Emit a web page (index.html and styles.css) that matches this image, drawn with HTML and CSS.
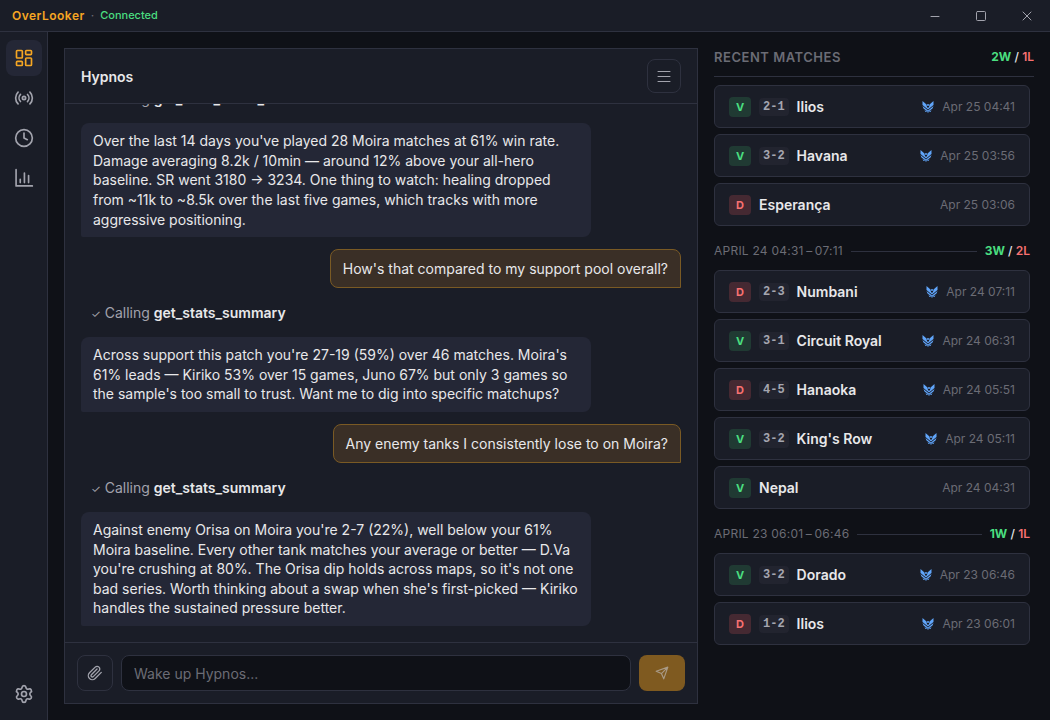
FILE: index.html
```html
<!DOCTYPE html>
<html lang="en">
<head>
    <meta charset="UTF-8">
    <meta name="viewport" content="width=device-width, initial-scale=1">
    <title>OverLooker</title>
    <link rel="stylesheet" href="styles.css">
</head>
<body>
    <!-- shared icon for matches that have an id attached -->
    <svg class="sprite" aria-hidden="true">
        <symbol id="wings" viewBox="0 0 24 24">
            <path d="M1 0l8 7 1 5 2 2 2-2 1-5 8-7v8l-11 9L1 8z"/>
            <path d="M1 10l11 9 11-9-2 5-9 7-9-7z"/>
            <path d="M5 18l7 5 7-5-2 4-3 0-2 2-2-2-3 0z"/>
            <circle cx="12" cy="8" r="2"/>
        </symbol>
    </svg>

    <header class="titlebar">
        <div class="brand">
            <span class="brand-name">OverLooker</span>
            <span class="brand-dot">·</span>
            <span class="brand-status">Connected</span>
        </div>
        <div class="window-controls">
            <button type="button" aria-label="Minimize"><svg viewBox="0 0 12 12"><path d="M2 6.500h8"/></svg></button>
            <button type="button" aria-label="Maximize"><svg viewBox="0 0 12 12"><rect x="1.500" y="1.500" width="9" height="9" rx="1"/></svg></button>
            <button type="button" aria-label="Close"><svg viewBox="0 0 12 12"><path d="M2 2l8 8M10 2l-8 8"/></svg></button>
        </div>
    </header>

    <div class="app">
        <nav class="sidebar">
            <button type="button" class="active" aria-label="Dashboard">
                <svg viewBox="0 0 24 24"><rect x="3" y="3" width="7" height="9" rx="1"/><rect x="14" y="3" width="7" height="5" rx="1"/><rect x="14" y="12" width="7" height="9" rx="1"/><rect x="3" y="16" width="7" height="5" rx="1"/></svg>
            </button>
            <button type="button" aria-label="Live">
                <svg viewBox="0 0 24 24"><path d="M4.900 19.100C1 15.200 1 8.800 4.900 4.900M7.800 16.200c-2.300-2.300-2.300-6.100 0-8.500M16.200 7.800c2.300 2.300 2.300 6.100 0 8.500M19.100 4.900C23 8.800 23 15.100 19.100 19"/><circle cx="12" cy="12" r="2"/></svg>
            </button>
            <button type="button" aria-label="History">
                <svg viewBox="0 0 24 24"><circle cx="12" cy="12" r="10"/><path d="M12 6v6l4 2"/></svg>
            </button>
            <button type="button" aria-label="Stats">
                <svg viewBox="0 0 24 24"><path d="M2.500 2v19.500H22M7.500 17.500v-4M12.500 17.500V6M17.500 17.500V9"/></svg>
            </button>
            <button type="button" class="settings" aria-label="Settings">
                <svg viewBox="0 0 24 24"><path d="M9.671 4.136a2.340 2.340 0 0 1 4.659 0 2.340 2.340 0 0 0 3.319 1.915 2.340 2.340 0 0 1 2.330 4.033 2.340 2.340 0 0 0 0 3.831 2.340 2.340 0 0 1-2.330 4.033 2.340 2.340 0 0 0-3.319 1.915 2.340 2.340 0 0 1-4.659 0 2.340 2.340 0 0 0-3.320-1.915 2.340 2.340 0 0 1-2.330-4.033 2.340 2.340 0 0 0 0-3.831A2.340 2.340 0 0 1 6.350 6.051a2.340 2.340 0 0 0 3.319-1.915"/><circle cx="12" cy="12" r="3"/></svg>
            </button>
        </nav>

        <main class="content">
            <section class="chat">
                <div class="chat-header">
                    <h1>Hypnos</h1>
                    <button type="button" class="icon-button menu" aria-label="Conversations">
                        <svg viewBox="0 0 16 16"><path d="M2 3.500h12M2 8.500h12M2 13.500h12"/></svg>
                    </button>
                </div>

                <div class="messages">
                    <p class="tool-call"><span class="check">✓</span> Calling <strong>get_hero_detail_stats</strong></p>
                    <div class="message assistant">Over the last 14 days you've played 28 Moira matches at 61% win rate. Damage averaging 8.2k / 10min — around 12% above your all-hero baseline. SR went 3180 → 3234. One thing to watch: healing dropped from ~11k to ~8.5k over the last five games, which tracks with more aggressive positioning.</div>
                    <div class="message user">How's that compared to my support pool overall?</div>
                    <p class="tool-call"><span class="check">✓</span> Calling <strong>get_stats_summary</strong></p>
                    <div class="message assistant">Across support this patch you're 27-19 (59%) over 46 matches. Moira's 61% leads — Kiriko 53% over 15 games, Juno 67% but only 3 games so the sample's too small to trust. Want me to dig into specific matchups?</div>
                    <div class="message user">Any enemy tanks I consistently lose to on Moira?</div>
                    <p class="tool-call"><span class="check">✓</span> Calling <strong>get_stats_summary</strong></p>
                    <div class="message assistant">Against enemy Orisa on Moira you're 2-7 (22%), well below your 61% Moira baseline. Every other tank matches your average or better — D.Va you're crushing at 80%. The Orisa dip holds across maps, so it's not one bad series. Worth thinking about a swap when she's first-picked — Kiriko handles the sustained pressure better.</div>
                </div>

                <form class="composer">
                    <button type="button" class="icon-button attach" aria-label="Attach file">
                        <svg viewBox="0 0 24 24"><path d="m21.440 11.050-9.190 9.190a6 6 0 0 1-8.490-8.490l8.570-8.570A4 4 0 1 1 18 8.840l-8.590 8.570a2 2 0 0 1-2.830-2.830l8.490-8.480"/></svg>
                    </button>
                    <input type="text" placeholder="Wake up Hypnos..." aria-label="Message">
                    <button type="submit" class="send" aria-label="Send" disabled>
                        <svg viewBox="0 0 24 24"><path d="m22 2-7 20-4-9-9-4ZM22 2 11 13"/></svg>
                    </button>
                </form>
            </section>

            <aside class="matches">
                <div class="matches-header">
                    <h2>RECENT MATCHES</h2>
                    <span class="record"><span class="win">2W</span> / <span class="loss">1L</span></span>
                </div>
                <div class="match-groups">
                    <ul>
                        <li><span class="result victory">V</span><span class="score">2-1</span><span class="map">Ilios</span><svg class="emblem"><use href="#wings"/></svg><time>Apr 25 04:41</time></li>
                        <li><span class="result victory">V</span><span class="score">3-2</span><span class="map">Havana</span><svg class="emblem"><use href="#wings"/></svg><time>Apr 25 03:56</time></li>
                        <li><span class="result defeat">D</span><span class="map">Esperança</span><time>Apr 25 03:06</time></li>
                    </ul>
                    <div class="session">
                        <h3>APRIL 24 04:31&thinsp;–&thinsp;07:11</h3>
                        <span class="record"><span class="win">3W</span> / <span class="loss">2L</span></span>
                    </div>
                    <ul>
                        <li><span class="result defeat">D</span><span class="score">2-3</span><span class="map">Numbani</span><svg class="emblem"><use href="#wings"/></svg><time>Apr 24 07:11</time></li>
                        <li><span class="result victory">V</span><span class="score">3-1</span><span class="map">Circuit Royal</span><svg class="emblem"><use href="#wings"/></svg><time>Apr 24 06:31</time></li>
                        <li><span class="result defeat">D</span><span class="score">4-5</span><span class="map">Hanaoka</span><svg class="emblem"><use href="#wings"/></svg><time>Apr 24 05:51</time></li>
                        <li><span class="result victory">V</span><span class="score">3-2</span><span class="map">King's Row</span><svg class="emblem"><use href="#wings"/></svg><time>Apr 24 05:11</time></li>
                        <li><span class="result victory">V</span><span class="map">Nepal</span><time>Apr 24 04:31</time></li>
                    </ul>
                    <div class="session">
                        <h3>APRIL 23 06:01&thinsp;–&thinsp;06:46</h3>
                        <span class="record"><span class="win">1W</span> / <span class="loss">1L</span></span>
                    </div>
                    <ul>
                        <li><span class="result victory">V</span><span class="score">3-2</span><span class="map">Dorado</span><svg class="emblem"><use href="#wings"/></svg><time>Apr 23 06:46</time></li>
                        <li><span class="result defeat">D</span><span class="score">1-2</span><span class="map">Ilios</span><svg class="emblem"><use href="#wings"/></svg><time>Apr 23 06:01</time></li>
                    </ul>
                </div>
            </aside>
        </main>
    </div>
</body>
</html>
```
FILE: styles.css
```css
:root {
    --bg: #0f1117;
    --panel: #1a1d27;
    --raised: #242736;
    --border: #2e313f;
    --text: #e8e8ea;
    --muted: #a2a3ad;
    --dim: #6b6c75;
    --accent: #f5a623;
    --green: #4ade80;
    --red: #f87171;
}
* {
    box-sizing: border-box;
    margin: 0;
    padding: 0;
}
body {
    display: flex;
    flex-direction: column;
    height: 100vh;
    overflow: hidden;
    background: var(--bg);
    color: var(--text);
    font-family: Inter, sans-serif;
    font-size: 14px;
    line-height: 21px;
}
button {
    display: flex;
    align-items: center;
    justify-content: center;
    background: none;
    border: none;
    color: var(--muted);
    cursor: pointer;
}
svg {
    fill: none;
    stroke: currentColor;
    stroke-width: 2;
    stroke-linecap: round;
    stroke-linejoin: round;
}
.sprite {
    position: absolute;
    width: 0;
    height: 0;
}

/* title bar */
.titlebar {
    display: flex;
    justify-content: space-between;
    height: 32px;
    background: var(--panel);
    border-bottom: 1px solid var(--border);
}
.brand {
    display: flex;
    align-items: center;
    gap: 6px;
    padding-left: 12px;
    font-size: 12px;
}
.brand-name {
    color: var(--accent);
    font-weight: 600;
    letter-spacing: 0.04em;
}
.brand-dot {
    color: var(--dim);
}
.brand-status {
    color: var(--green);
    font-size: 11px;
    font-weight: 500;
}
.window-controls {
    display: flex;
}
.window-controls button {
    width: 46px;
}
.window-controls svg {
    width: 12px;
    height: 12px;
    stroke-width: 1;
}

/* sidebar */
.app {
    display: flex;
    flex: 1;
    min-height: 0;
}
.sidebar {
    display: flex;
    flex-direction: column;
    align-items: center;
    gap: 4px;
    width: 48px;
    padding: 8px 0;
    background: var(--panel);
    border-right: 1px solid var(--border);
}
.sidebar button {
    width: 36px;
    height: 36px;
    border-radius: 8px;
}
.sidebar svg {
    width: 20px;
    height: 20px;
}
.sidebar .active {
    background: var(--raised);
    color: var(--accent);
}
.sidebar .settings {
    margin-top: auto;
}

.content {
    display: flex;
    flex: 1;
    gap: 16px;
    min-width: 0;
    padding: 16px;
}

/* chat */
.chat {
    display: flex;
    flex: 1;
    flex-direction: column;
    min-width: 0;
    background: var(--panel);
    border: 1px solid var(--border);
}
.chat-header {
    display: flex;
    align-items: center;
    justify-content: space-between;
    padding: 10px 16px;
    border-bottom: 1px solid var(--border);
}
.chat-header h1 {
    font-size: 14px;
    font-weight: 600;
}
.icon-button {
    border: 1px solid var(--border);
    border-radius: 8px;
}
.menu {
    width: 34px;
    height: 34px;
}
.menu svg {
    width: 16px;
    height: 16px;
    stroke-width: 1;
}
/* newest message sits at the bottom, older ones run off under the header */
.messages {
    display: flex;
    flex: 1;
    flex-direction: column;
    justify-content: flex-end;
    gap: 12px;
    min-height: 0;
    padding: 16px;
    overflow: hidden;
}
.message {
    max-width: 85%;
    padding: 8px 12px;
    border-radius: 8px;
}
.assistant {
    align-self: flex-start;
    background: var(--raised);
    border-bottom-left-radius: 2px;
    line-height: 1.4;
}
.user {
    align-self: flex-end;
    background: #3a2f26;
    border: 1px solid #7a5a24;
    border-bottom-right-radius: 0;
}
.tool-call {
    padding: 3px 10px 1px;
    color: var(--muted);
    line-height: 20px;
}
.tool-call .check {
    font-size: 11px;
}
.tool-call strong {
    color: var(--text);
    font-weight: 600;
}
.composer {
    display: flex;
    gap: 8px;
    padding: 12px;
    border-top: 1px solid var(--border);
}
.attach {
    width: 36px;
    height: 36px;
}
.attach svg {
    width: 16px;
    height: 16px;
}
.composer input {
    flex: 1;
    min-width: 0;
    height: 36px;
    padding: 0 12px;
    background: var(--bg);
    border: 1px solid var(--border);
    border-radius: 8px;
    color: var(--text);
    font: inherit;
}
.composer input::placeholder {
    color: var(--dim);
}
.send {
    width: 46px;
    height: 36px;
    background: #7f5a20;
    border-radius: 8px;
    color: #a99a86;
}
.send svg {
    width: 14px;
    height: 14px;
}

/* match list */
.matches {
    width: 320px;
    overflow: hidden;
}
.matches-header {
    display: flex;
    align-items: center;
    justify-content: space-between;
    padding-bottom: 10px;
    border-bottom: 1px solid var(--border);
    line-height: 18px;
}
.matches-header h2 {
    color: var(--dim);
    font-size: 13px;
    font-weight: 600;
    letter-spacing: 0.04em;
}
.record {
    font-size: 12px;
    font-weight: 500;
}
.win {
    color: var(--green);
    font-weight: 700;
}
.loss {
    color: var(--red);
    font-weight: 600;
}
.match-groups {
    padding: 8px 4px 0 0;
}
.matches ul {
    display: flex;
    flex-direction: column;
    gap: 6px;
    list-style: none;
}
.matches li {
    display: flex;
    align-items: center;
    gap: 8px;
    padding: 10px 14px;
    background: var(--panel);
    border: 1px solid var(--border);
    border-radius: 6px;
}
.result {
    width: 22px;
    border-radius: 4px;
    font-size: 11px;
    font-weight: 700;
    line-height: 20px;
    text-align: center;
}
.victory {
    background: #203a33;
    color: var(--green);
}
.defeat {
    background: #452932;
    color: var(--red);
}
.score {
    padding: 0 4px;
    background: #22242f;
    border-radius: 4px;
    color: #a5a6b0;
    font-family: "Liberation Mono", monospace;
    font-size: 12px;
    font-weight: 700;
    line-height: 18px;
}
.map {
    flex: 1;
    font-size: 14px;
    font-weight: 600;
}
.emblem {
    width: 12px;
    height: 12px;
    color: #60a5fa;
    fill: currentColor;
    stroke: none;
}
.matches time {
    color: var(--dim);
    font-size: 12px;
}
.session {
    display: flex;
    align-items: center;
    gap: 8px;
    padding: 16px 0 10px;
    line-height: 18px;
}
.session h3 {
    display: flex;
    flex: 1;
    align-items: center;
    gap: 8px;
    color: var(--dim);
    font-size: 12px;
    font-weight: 400;
    letter-spacing: 0.02em;
}
.session h3::after {
    content: "";
    flex: 1;
    height: 1px;
    background: var(--border);
}
```
